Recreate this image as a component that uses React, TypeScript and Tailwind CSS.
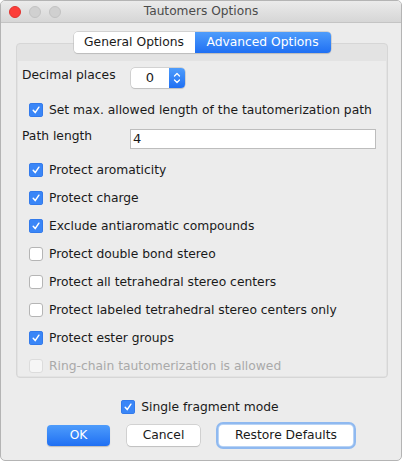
import React from "react";

const font = { fontFamily: '"DejaVu Sans", "Lucida Grande", sans-serif' };

function Check({ checked, disabled }: { checked?: boolean; disabled?: boolean }) {
  if (checked) {
    return (
      <div className="w-[14px] h-[14px] rounded-[3px] bg-[#3a86f7] flex items-center justify-center shrink-0 shadow-[inset_0_0_0_0.5px_#2a6fe0]">
        <svg width="10" height="10" viewBox="0 0 10 10">
          <path d="M2.2 5.3 L4.2 7.6 L7.9 2.2" fill="none" stroke="white" strokeWidth="1.5" strokeLinecap="round" strokeLinejoin="round" />
        </svg>
      </div>
    );
  }
  return (
    <div
      className={`w-[14px] h-[14px] rounded-[3px] shrink-0 border ${disabled ? "border-[#dcdcdc] bg-[#f6f6f6]" : "border-[#b5b5b5] bg-white"}`}
    />
  );
}

function CheckRow({ label, checked, disabled }: { label: string; checked?: boolean; disabled?: boolean }) {
  return (
    <div className="h-[28px] shrink-0 flex items-center pl-[11px] gap-[6px]">
      <Check checked={checked} disabled={disabled} />
      <span className={disabled ? "text-[#a9a9a9]" : "text-[#1a1a1a]"}>{label}</span>
    </div>
  );
}

export default function App() {
  return (
    <div className="w-[402px] h-[461px] bg-white" style={font}>
      <div className="w-[402px] h-[461px] border border-[#b4b4b4] rounded-[5px] overflow-hidden bg-[#ececec] flex flex-col text-[12.3px]">
        {/* title bar */}
        <div className="h-[22px] shrink-0 bg-gradient-to-b from-[#ebebeb] to-[#d6d6d6] border-b border-[#c4c4c4] flex items-center relative">
          <div className="flex items-center gap-[8px] pl-[8px]">
            <div className="w-[12px] h-[12px] rounded-full bg-[#fc3d39] border border-[#e0332f]" />
            <div className="w-[12px] h-[12px] rounded-full bg-[#d0d0d0] border border-[#c2c2c2]" />
            <div className="w-[12px] h-[12px] rounded-full bg-[#d0d0d0] border border-[#c2c2c2]" />
          </div>
          <div className="absolute inset-0 flex items-center justify-center text-[#4b4b4b] text-[12.2px]">Tautomers Options</div>
        </div>

        {/* tabs */}
        <div className="mt-[9px] flex justify-center relative z-10 pl-[2px]">
          <div className="flex h-[21px] rounded-[4px] shadow-[0_0_0_0.5px_#b8b8b8,0_1px_1px_rgba(0,0,0,0.15)] overflow-hidden">
            <div className="w-[121px] bg-white text-[#1a1a1a] flex items-center justify-center">General Options</div>
            <div className="w-[136px] bg-gradient-to-b from-[#4e9cfb] to-[#1f6ff3] text-white flex items-center justify-center">Advanced Options</div>
          </div>
        </div>

        {/* panel */}
        <div className="mt-[-10px] ml-[15px] mr-[13px] h-[335px] shrink-0 rounded-[4px] border border-[#d6d6d6] bg-[#e3e3e3] flex flex-col">
          <div className="mt-[17px] flex-1 bg-[#ececec] mx-px mb-px flex flex-col">
            <div className="mt-[7px] h-[20px] flex items-center pl-[4px]">
              <span className="w-[109px] text-[#1a1a1a] -mt-[6px]">Decimal places</span>
              <div className="flex h-[20px] w-[54px] rounded-[4px] bg-white shadow-[0_0_0_0.5px_#b8b8b8,0_1px_1px_rgba(0,0,0,0.15)] overflow-hidden">
                <div className="flex-1 flex items-center justify-center text-[#1a1a1a] text-[13px]">0</div>
                <div className="w-[16px] bg-gradient-to-b from-[#4e9cfb] to-[#1f6ff3] flex items-center justify-center">
                  <svg width="10" height="14" viewBox="0 0 10 14">
                    <path d="M2.5 5 L5 2.5 L7.5 5 M2.5 9 L5 11.5 L7.5 9" fill="none" stroke="white" strokeWidth="1.3" strokeLinecap="round" strokeLinejoin="round" />
                  </svg>
                </div>
              </div>
            </div>
            <div className="mt-[8px]">
              <CheckRow label="Set max. allowed length of the tautomerization path" checked />
            </div>
            <div className="mt-[5px] h-[20px] flex items-center pl-[4px]">
              <span className="w-[108px] text-[#1a1a1a] -mt-[6px]">Path length</span>
              <div className="w-[246px] h-[20px] bg-white border border-[#bdbdbd] flex items-center pl-[2px] text-[13px] text-[#1a1a1a]">4</div>
            </div>
            <div className="mt-[7px] flex flex-col">
              <CheckRow label="Protect aromaticity" checked />
              <CheckRow label="Protect charge" checked />
              <CheckRow label="Exclude antiaromatic compounds" checked />
              <CheckRow label="Protect double bond stereo" />
              <CheckRow label="Protect all tetrahedral stereo centers" />
              <CheckRow label="Protect labeled tetrahedral stereo centers only" />
              <CheckRow label="Protect ester groups" checked />
              <div className="h-[22px] shrink-0 flex flex-col">
                <CheckRow label="Ring-chain tautomerization is allowed" disabled />
              </div>
            </div>
          </div>
        </div>

        {/* bottom */}
        <div className="mt-[20px] flex justify-center items-center gap-[6px] h-[18px] pr-[2px]">
          <Check checked />
          <span className="text-[#1a1a1a]">Single fragment mode</span>
        </div>
        <div className="mt-[9px] flex items-center pl-[46px] h-[21px]">
          <div className="w-[63px] h-[21px] rounded-[4px] bg-gradient-to-b from-[#4e9cfb] to-[#1f6ff3] text-white flex items-center justify-center shadow-[0_1px_1px_rgba(0,0,0,0.2)]">OK</div>
          <div className="ml-[17px] w-[73px] h-[21px] rounded-[4px] bg-white text-[#1a1a1a] flex items-center justify-center shadow-[0_0_0_0.5px_#b8b8b8,0_1px_1px_rgba(0,0,0,0.15)]">Cancel</div>
          <div className="ml-[19px] w-[134px] h-[21px] rounded-[4px] bg-white text-[#1a1a1a] flex items-center justify-center shadow-[0_0_0_1px_#b8d3f5,0_0_0_3px_#8fb9f0]">Restore Defaults</div>
        </div>
      </div>
    </div>
  );
}
